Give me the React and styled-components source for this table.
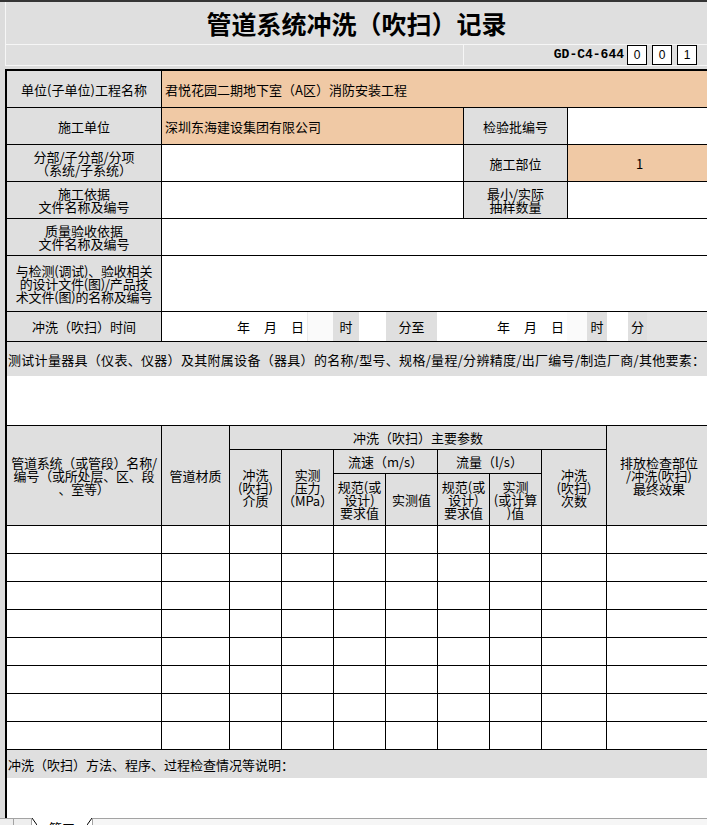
import React from 'react';
import styled, {createGlobalStyle, css} from 'styled-components'

const GlobalStyle=createGlobalStyle`
*{box-sizing:border-box;}
html,body{margin:0;padding:0;overflow:hidden;}
body{
  font-family:"Noto Sans CJK SC","Liberation Sans",sans-serif;
  color:#000;
  background:#dcdcdc;
}
`

const GRAY='#dfdfdf'
const ORANGE='#f0c9a5'

const Page=styled.div`
width:707px;
height:825px;
display:flex;
flex-direction:column;
overflow:hidden;
background:#dcdcdc;
`

const TopRule=styled.div`
height:2px;
flex-shrink:0;
background:#353535;
`

const Banner=styled.div`
margin-left:5px;
border-left:1px solid #f6f6f6;
background:${GRAY};
flex-shrink:0;
`

const TitleRow=styled.div`
height:43px;
border-bottom:1px solid #f6f6f6;
display:flex;
align-items:center;
justify-content:center;
font-size:25px;
font-weight:700;
`

const CodeRow=styled.div`
height:21px;
border-bottom:1px solid #f6f6f6;
display:grid;
grid-template-columns:458px 1fr;
`

const CodeSpacer=styled.div`
border-right:1px solid #f6f6f6;
`

const CodeBoxes=styled.div`
display:flex;
align-items:flex-start;
justify-content:flex-end;
gap:5px;
padding-right:10px;
`

const FormCode=styled.span`
font-family:"Liberation Mono",monospace;
font-weight:700;
font-size:13px;
line-height:20px;
margin-right:-2px;
`

const DigitBox=styled.span`
width:20px;
height:20px;
border:1px solid #000;
background:#fff;
display:flex;
align-items:center;
justify-content:center;
font-family:"Liberation Sans",sans-serif;
font-size:12px;
`

const Sheet=styled.div`
margin-top:3px;
margin-left:5px;
width:707px;
flex:1;
border-left:2px solid #000;
border-top:2px solid #000;
background:#fff;
display:flex;
flex-direction:column;
`

const InfoGrid=styled.div`
display:grid;
grid-template-columns:155px 302px 104px 1fr;
grid-template-rows:repeat(5,37px) 56px;
`

const tones={
    label:GRAY,
    value:ORANGE,
    blank:'#fff',
}

// one spreadsheet cell; $col / $row place it in the grid
const Cell=styled.div`
border-right:1px solid #000;
border-bottom:1px solid #000;
background:${({$tone})=>tones[$tone||'blank']};
display:flex;
align-items:center;
justify-content:${({$left})=>$left?'flex-start':'center'};
text-align:center;
font-size:13px;
line-height:13px;
padding:0 3px;
white-space:nowrap;
${({$col})=>$col&&css`grid-column:${$col};`}
${({$row})=>$row&&css`grid-row:${$row};`}
${({$tight})=>$tight&&css`
  padding:0 1px;
  letter-spacing:-0.2px;
`}
`

const TimeRow=styled.div`
display:flex;
height:30px;
border-bottom:1px solid #000;
`

const segTones={
    label:GRAY,
    blank:'#fff',
    soft:'#fafafa',
    tail:'#e4e4e4',
}

const TimeSeg=styled.div`
flex:${({$w})=>$w?`0 0 ${$w}px`:'1'};
background:${({$tone})=>segTones[$tone||'blank']};
border-right:${({$edge})=>$edge==='black'?'1px solid #000':$edge==='light'?'1px solid #ececec':'none'};
display:flex;
align-items:center;
justify-content:${({$right})=>$right?'flex-end':'center'};
padding-right:${({$right})=>$right?'3px':'0'};
font-size:13px;
gap:14px;
white-space:nowrap;
`

const EquipBar=styled.div`
height:34px;
background:${GRAY};
display:flex;
align-items:center;
padding-left:1px;
font-size:13px;
letter-spacing:0.3px;
white-space:nowrap;
`

const EquipBlank=styled.div`
height:50px;
border-bottom:1px solid #000;
`

const ParamGrid=styled.div`
display:grid;
grid-template-columns:155px 68px repeat(6,52px) 65px 1fr;
grid-template-rows:24px 24px 52px repeat(8,28px);
`

const NoteBar=styled.div`
height:28px;
background:${GRAY};
display:flex;
align-items:center;
padding-left:1px;
font-size:13px;
white-space:nowrap;
`

const SheetRest=styled.div`
flex:1;
`

const TabBar=styled.div`
height:7px;
flex-shrink:0;
display:flex;
overflow:hidden;
background:#ececec;
`

const NavCell=styled.div`
flex:0 0 ${({$w})=>$w}px;
border-top:1px solid #a3a3a3;
border-right:1px solid #a3a3a3;
background:#eeeeee;
`

const SheetTab=styled.div`
flex:0 0 60px;
display:flex;
background:#fff;
font-size:13px;
line-height:13px;
`

const TabName=styled.span`
flex:1;
padding:3px 0 0 12px;
`

const ScrollTrack=styled.div`
flex:1;
border-top:1px solid #a3a3a3;
border-left:1px solid #a3a3a3;
background:#f6f6f6;
`

function TabEdge({flip}) {
    return (
        <svg width="5" height="7" viewBox="0 0 5 7" style={{flexShrink:0}}>
            <line x1={flip?5:0} y1="0" x2={flip?0:5} y2="7" stroke="#000" strokeWidth="1"/>
        </svg>
    )
}

function DateParts() {
    return (
        <>
            <span>年</span><span>月</span><span>日</span>
        </>
    )
}

const dataRows=Array.from({length:8})
const dataCols=Array.from({length:10})

function App() {
    return (
        <Page>
            <GlobalStyle/>
            <TopRule/>
            <Banner>
                <TitleRow>管道系统冲洗（吹扫）记录</TitleRow>
                <CodeRow>
                    <CodeSpacer/>
                    <CodeBoxes>
                        <FormCode>GD-C4-644</FormCode>
                        <DigitBox>0</DigitBox>
                        <DigitBox>0</DigitBox>
                        <DigitBox>1</DigitBox>
                    </CodeBoxes>
                </CodeRow>
            </Banner>

            <Sheet>
                <InfoGrid>
                    <Cell $tone="label">单位(子单位)工程名称</Cell>
                    <Cell $tone="value" $left $col="2 / 5">君悦花园二期地下室（A区）消防安装工程</Cell>

                    <Cell $tone="label">施工单位</Cell>
                    <Cell $tone="value" $left>深圳东海建设集团有限公司</Cell>
                    <Cell $tone="label">检验批编号</Cell>
                    <Cell/>

                    <Cell $tone="label">分部/子分部/分项<br/>（系统/子系统）</Cell>
                    <Cell/>
                    <Cell $tone="label">施工部位</Cell>
                    <Cell $tone="value">1</Cell>

                    <Cell $tone="label">施工依据<br/>文件名称及编号</Cell>
                    <Cell/>
                    <Cell $tone="label">最小/实际<br/>抽样数量</Cell>
                    <Cell/>

                    <Cell $tone="label">质量验收依据<br/>文件名称及编号</Cell>
                    <Cell $col="2 / 5"/>

                    <Cell $tone="label" $tight>与检测(调试)、验收相关<br/>的设计文件(图)/产品技<br/>术文件(图)的名称及编号</Cell>
                    <Cell $col="2 / 5"/>
                </InfoGrid>

                <TimeRow>
                    <TimeSeg $w={155} $tone="label" $edge="black">冲洗（吹扫）时间</TimeSeg>
                    <TimeSeg $w={146} $edge="light" $right><DateParts/></TimeSeg>
                    <TimeSeg $w={25} $tone="soft"/>
                    <TimeSeg $w={26} $tone="label">时</TimeSeg>
                    <TimeSeg $w={27}/>
                    <TimeSeg $w={51} $tone="label">分至</TimeSeg>
                    <TimeSeg $w={130} $right><DateParts/></TimeSeg>
                    <TimeSeg $w={20} $tone="soft"/>
                    <TimeSeg $w={20} $tone="label">时</TimeSeg>
                    <TimeSeg $w={21}/>
                    <TimeSeg $w={19} $tone="label">分</TimeSeg>
                    <TimeSeg $tone="tail"/>
                </TimeRow>

                <EquipBar>测试计量器具（仪表、仪器）及其附属设备（器具）的名称/型号、规格/量程/分辨精度/出厂编号/制造厂商/其他要素：</EquipBar>
                <EquipBlank/>

                <ParamGrid>
                    <Cell $tone="label" $row="1 / 4" $tight>管道系统（或管段）名称/<br/>编号（或所处层、区、段<br/>、室等）</Cell>
                    <Cell $tone="label" $row="1 / 4">管道材质</Cell>
                    <Cell $tone="label" $col="3 / 10">冲洗（吹扫）主要参数</Cell>
                    <Cell $tone="label" $col="10" $row="1 / 4">排放检查部位<br/>/冲洗(吹扫)<br/>最终效果</Cell>

                    <Cell $tone="label" $col="3" $row="2 / 4">冲洗<br/>(吹扫)<br/>介质</Cell>
                    <Cell $tone="label" $col="4" $row="2 / 4" $tight>实测<br/>压力<br/>（MPa）</Cell>
                    <Cell $tone="label" $col="5 / 7" $row="2">流速（m/s）</Cell>
                    <Cell $tone="label" $col="7 / 9" $row="2">流量（l/s）</Cell>
                    <Cell $tone="label" $col="9" $row="2 / 4">冲洗<br/>(吹扫)<br/>次数</Cell>

                    <Cell $tone="label" $col="5" $row="3">规范(或<br/>设计)<br/>要求值</Cell>
                    <Cell $tone="label" $col="6" $row="3">实测值</Cell>
                    <Cell $tone="label" $col="7" $row="3">规范(或<br/>设计)<br/>要求值</Cell>
                    <Cell $tone="label" $col="8" $row="3">实测<br/>(或计算<br/>)值</Cell>

                    {dataRows.map((_, r)=>dataCols.map((__, c)=>(
                        <Cell key={`${r}-${c}`}/>
                    )))}
                </ParamGrid>

                <NoteBar>冲洗（吹扫）方法、程序、过程检查情况等说明：</NoteBar>
                <SheetRest/>
            </Sheet>

            <TabBar>
                <NavCell $w={14}/>
                <NavCell $w={18}/>
                <SheetTab>
                    <TabEdge/>
                    <TabName>管工</TabName>
                    <TabEdge flip/>
                </SheetTab>
                <ScrollTrack/>
            </TabBar>
        </Page>
    );
}

export default App;
